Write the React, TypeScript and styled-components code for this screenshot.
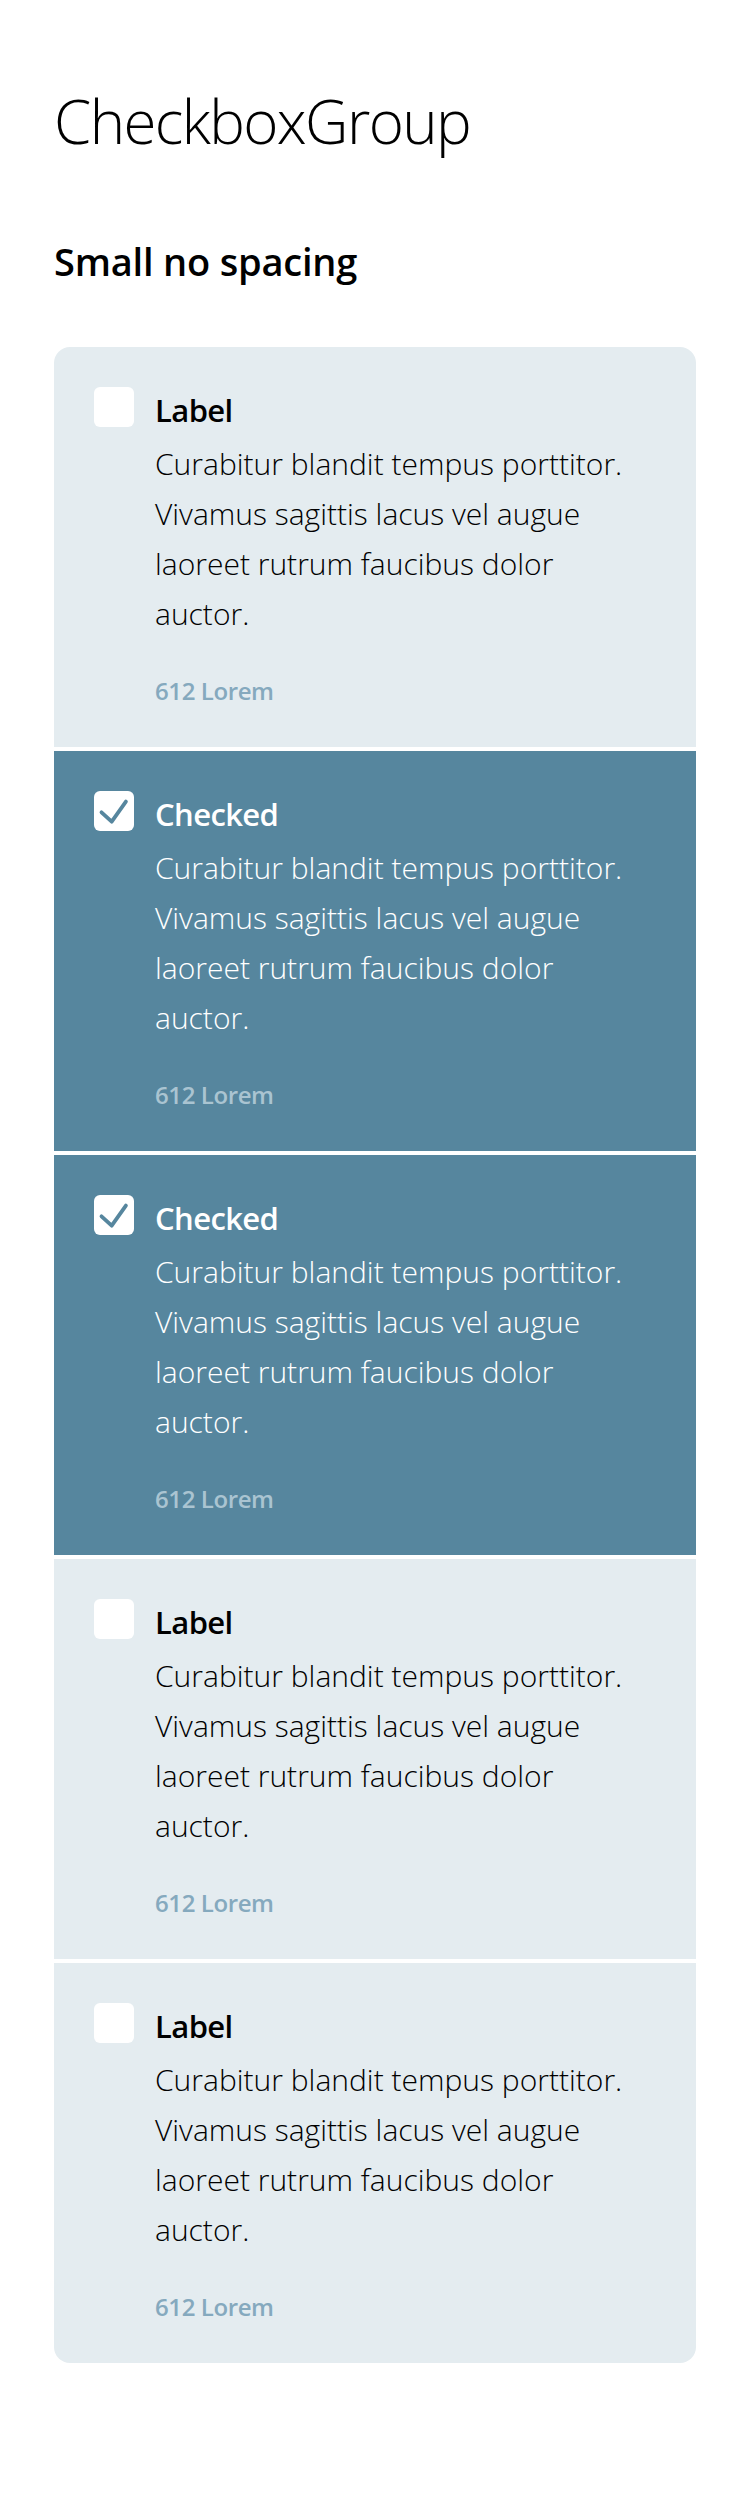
import React from "react";
import styled, { createGlobalStyle } from "styled-components";

const Global = createGlobalStyle`
  html, body { margin: 0; padding: 0; background: #ffffff; }
  body { font-family: "Open Sans", "Noto Sans", "DejaVu Sans", sans-serif; color: #000; }
  * { box-sizing: border-box; }
`;

const Page = styled.main`
  padding: 81px 54px 140px 54px;
`;

const Title = styled.h1`
  margin: 0;
  font-size: 60px;
  line-height: 80px;
  font-weight: 300;
  letter-spacing: -1.6px;
`;

const Subtitle = styled.h2`
  margin: 76px 0 0 0;
  font-size: 38px;
  line-height: 48px;
  font-weight: 600;
  letter-spacing: -0.2px;
`;

const Group = styled.div`
  margin-top: 62px;
  display: flex;
  flex-direction: column;
  gap: 4px;
  border-radius: 16px;
  overflow: hidden;
  width: 642px;
`;

const Item = styled.label<{ $checked: boolean }>`
  display: grid;
  grid-template-columns: 40px 1fr;
  column-gap: 21px;
  padding: 40px 30px 40px 40px;
  background: ${(p) => (p.$checked ? "#56869e" : "#e4ecf0")};
  color: ${(p) => (p.$checked ? "#ffffff" : "#000000")};
  cursor: pointer;
`;

const Box = styled.span`
  width: 40px;
  height: 40px;
  border-radius: 6px;
  background: #ffffff;
  display: flex;
  align-items: center;
  justify-content: center;
`;

const Content = styled.div`
  display: flex;
  flex-direction: column;
`;

const Label = styled.div`
  font-size: 31px;
  line-height: 46px;
  font-weight: 600;
  letter-spacing: -0.6px;
`;

const Description = styled.p`
  margin: 6px 0 0 0;
  font-size: 30px;
  line-height: 50px;
  font-weight: 300;
  letter-spacing: 0;
  max-width: 482px;
`;

const Meta = styled.div<{ $checked: boolean }>`
  margin-top: 36px;
  font-size: 24px;
  line-height: 32px;
  font-weight: 600;
  letter-spacing: -0.4px;
  color: ${(p) => (p.$checked ? "#aac4d1" : "#85a9be")};
`;

const Check = () => (
  <svg width="40" height="40" viewBox="0 0 40 40" fill="none">
    <path
      d="M7.5 21.3 L17.7 30.7 L31.9 10.6"
      stroke="#56869e"
      strokeWidth="3.8"
      strokeLinecap="round"
      strokeLinejoin="round"
    />
  </svg>
);

const items = [
  { label: "Label", checked: false },
  { label: "Checked", checked: true },
  { label: "Checked", checked: true },
  { label: "Label", checked: false },
  { label: "Label", checked: false },
];

export default function App() {
  return (
    <>
      <Global />
      <Page>
        <Title>CheckboxGroup</Title>
        <Subtitle>Small no spacing</Subtitle>
        <Group>
          {items.map((it, i) => (
            <Item key={i} $checked={it.checked}>
              <Box>{it.checked && <Check />}</Box>
              <Content>
                <Label>{it.label}</Label>
                <Description>
                  Curabitur blandit tempus porttitor. Vivamus sagittis lacus vel augue laoreet rutrum faucibus dolor auctor.
                </Description>
                <Meta $checked={it.checked}>612 Lorem</Meta>
              </Content>
            </Item>
          ))}
        </Group>
      </Page>
    </>
  );
}
